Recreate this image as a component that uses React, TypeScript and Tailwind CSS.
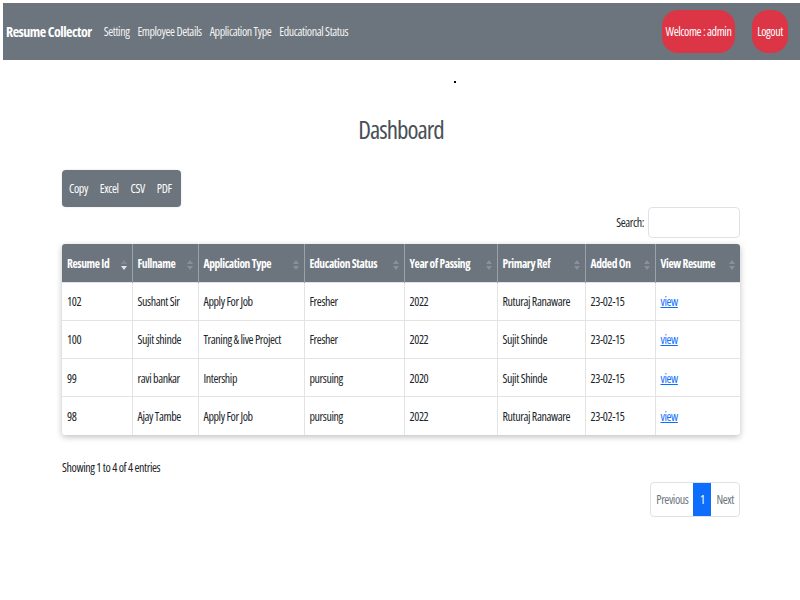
import React from "react";

const rows = [
  { id: "102", name: "Sushant Sir", type: "Apply For Job", edu: "Fresher", year: "2022", ref: "Ruturaj Ranaware", added: "23-02-15" },
  { id: "100", name: "Sujit shinde", type: "Traning & live Project", edu: "Fresher", year: "2022", ref: "Sujit Shinde", added: "23-02-15" },
  { id: "99", name: "ravi bankar", type: "Intership", edu: "pursuing", year: "2020", ref: "Sujit Shinde", added: "23-02-15" },
  { id: "98", name: "Ajay Tambe", type: "Apply For Job", edu: "pursuing", year: "2022", ref: "Ruturaj Ranaware", added: "23-02-15" },
];

const columns = [
  { label: "Resume Id", w: "w-[70px]", active: true },
  { label: "Fullname", w: "w-[66px]" },
  { label: "Application Type", w: "w-[106px]" },
  { label: "Education Status", w: "w-[100px]" },
  { label: "Year of Passing", w: "w-[93px]" },
  { label: "Primary Ref", w: "w-[88px]" },
  { label: "Added On", w: "w-[70px]" },
  { label: "View Resume", w: "w-[85px]" },
];

const SortIcon = ({ active }: { active?: boolean }) => (
  <svg width="6" height="12" viewBox="0 0 6 12" className="absolute right-[5px] top-[15px]">
    <path d="M0 5 L3 1 L6 5 Z" fill="#ffffff" opacity={active ? 0.15 : 0.2} />
    <path d="M0 7 L3 11 L6 7 Z" fill="#ffffff" opacity={active ? 0.8 : 0.2} />
  </svg>
);

export default function App() {
  return (
    <div
      className="w-[800px] h-[600px] bg-white text-[#212529] text-[12px] tracking-[-0.4px] font-stretch-75% overflow-hidden"
      style={{ fontFamily: "'Open Sans', sans-serif" }}
    >
      <div className="pt-[3px] pl-[3px]">
        <nav className="h-[57px] bg-[#6c757d] flex items-center pl-[3px] pr-[12px]">
          <span className="text-white font-bold text-[14px] tracking-[-0.5px] mr-[12px]">Resume Collector</span>
          <div className="flex gap-[8px] text-[#f3f3f3] text-[12px]">
            <span>Setting</span>
            <span>Employee Details</span>
            <span>Application Type</span>
            <span>Educational Status</span>
          </div>
          <div className="ml-auto flex items-center gap-[17px]">
            <button className="h-[43px] w-[73px] rounded-[16px] bg-[#dc3545] text-white text-[12px]">Welcome : admin</button>
            <button className="h-[43px] w-[36px] rounded-[16px] bg-[#dc3545] text-white text-[12px]">Logout</button>
          </div>
        </nav>
      </div>

      <div className="relative h-[20px]">
        <span className="absolute left-[454px] top-[21px] w-[2px] h-[2px] bg-black" />
      </div>

      <h1 className="text-center text-[25px] tracking-[-1px] text-[#495057] mt-[29px] leading-[40px] pl-[2px]">Dashboard</h1>

      <div className="px-[62px] mt-[21px] w-[802px]">
        <div className="flex">
          <div className="flex items-center h-[37px] w-[119px] bg-[#6c757d] rounded-[4px] text-white px-[7px] gap-[12px] shadow-[0_0_2px_rgba(0,0,0,0.15)]">
            <span>Copy</span>
            <span>Excel</span>
            <span>CSV</span>
            <span>PDF</span>
          </div>
        </div>

        <div className="flex justify-end items-center gap-[4px]">
          <span>Search:</span>
          <div className="w-[92px] h-[31px] border border-[#dee2e6] rounded-[4px]" />
        </div>

        <div className="mt-[6px] shadow-[0_2px_6px_rgba(0,0,0,0.25)] rounded-[3px] overflow-hidden w-[678px]">
          <table className="w-[678px] border-collapse table-fixed">
            <thead>
              <tr className="bg-[#6c757d] text-white h-[38px]">
                {columns.map((c, i) => (
                  <th
                    key={c.label}
                    className={`${c.w} relative text-left font-bold px-[5px] pt-[2px] text-[11.5px] ${i > 0 ? "border-l border-[#9aa1a7]" : ""}`}
                  >
                    {c.label}
                    <SortIcon active={c.active} />
                  </th>
                ))}
              </tr>
            </thead>
            <tbody>
              {rows.map((r) => (
                <tr key={r.id} className="h-[38.3px] border-t border-[#e3e3e3]">
                  <td className="px-[5px] pt-[2px]">{r.id}</td>
                  <td className="px-[5px] pt-[2px] border-l border-[#e3e3e3]">{r.name}</td>
                  <td className="px-[5px] pt-[2px] border-l border-[#e3e3e3]">{r.type}</td>
                  <td className="px-[5px] pt-[2px] border-l border-[#e3e3e3]">{r.edu}</td>
                  <td className="px-[5px] pt-[2px] border-l border-[#e3e3e3]">{r.year}</td>
                  <td className="px-[5px] pt-[2px] border-l border-[#e3e3e3]">{r.ref}</td>
                  <td className="px-[5px] pt-[2px] border-l border-[#e3e3e3]">{r.added}</td>
                  <td className="px-[5px] pt-[2px] border-l border-[#e3e3e3]">
                    <a className="text-[#0d6efd] underline">view</a>
                  </td>
                </tr>
              ))}
            </tbody>
          </table>
        </div>

        <div className="mt-[24px]">Showing 1 to 4 of 4 entries</div>

        <div className="flex justify-end mt-[5px] w-[678px]">
          <div className="flex h-[35px] border border-[#dee2e6] rounded-[4px] overflow-hidden">
            <span className="px-[5px] flex items-center text-[#6c757d]">Previous</span>
            <span className="w-[18px] flex items-center justify-center bg-[#0d6efd] text-white">1</span>
            <span className="px-[5px] flex items-center text-[#6c757d]">Next</span>
          </div>
        </div>
      </div>
    </div>
  );
}
